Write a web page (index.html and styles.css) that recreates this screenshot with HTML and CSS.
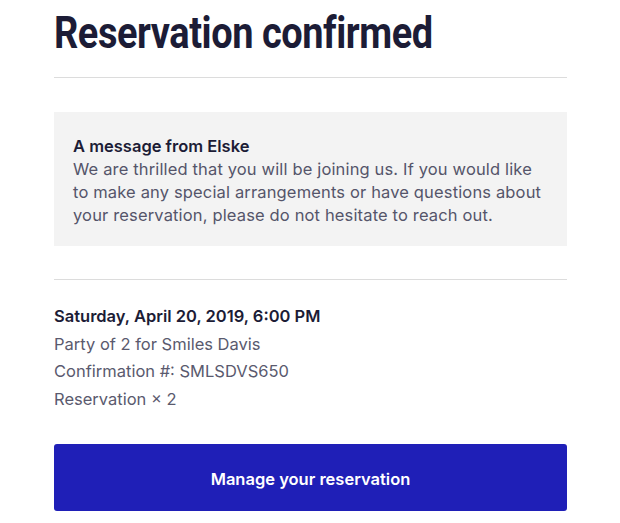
FILE: index.html
```html
<!DOCTYPE html>
<html>
<head>
<meta charset="utf-8">
<link rel="stylesheet" href="styles.css">
</head>
<body>
<main class="page">
  <h1 class="title">Reservation confirmed</h1>
  <hr class="divider">
  <section class="message">
    <h2 class="message-from">A message from Elske</h2>
    <p class="message-text">We are thrilled that you will be joining us. If you would like to make any special arrangements or have questions about your reservation, please do not hesitate to reach out.</p>
  </section>
  <hr class="divider">
  <section class="details">
    <div class="details-date">Saturday, April 20, 2019, 6:00 PM</div>
    <div class="details-line">Party of 2 for Smiles Davis</div>
    <div class="details-line">Confirmation #: SMLSDVS650</div>
    <div class="details-line">Reservation × 2</div>
  </section>
  <a class="button" href="#">Manage your reservation</a>
</main>
</body>
</html>
```

FILE: styles.css
```css
html, body {
  margin: 0;
  padding: 0;
  background: #ffffff;
}
.page {
  width: 513px;
  margin-left: 54px;
  font-family: "Inter", "Noto Sans", sans-serif;
  color: #1c1c36;
}
.title {
  font-family: "Roboto", "Liberation Sans", sans-serif;
  font-weight: 700;
  font-size: 44px;
  line-height: 52px;
  margin: 7px 0 0 0;
  letter-spacing: -0.5px;
  color: #1c1c36;
  white-space: nowrap;
  transform: scaleX(0.862);
  transform-origin: left center;
}
.divider {
  border: 0;
  border-top: 1px solid #dcdcdc;
  margin: 18px 0 0 0;
  height: 0;
}
.message {
  background: #f3f3f3;
  margin-top: 34px;
  padding: 23px 19px 19px 19px;
}
.message-from {
  font-size: 16.5px;
  font-weight: 600;
  line-height: 23px;
  margin: 0;
  color: #1c1c36;
}
.message-text {
  font-size: 16.5px;
  line-height: 23px;
  letter-spacing: 0.15px;
  margin: 0;
  color: #55556a;
}
.message + .divider {
  margin-top: 33px;
}
.details {
  padding-top: 23px;
}
.details-date {
  font-size: 16.5px;
  font-weight: 600;
  line-height: 27.5px;
  color: #1c1c36;
}
.details-line {
  font-size: 16.5px;
  line-height: 27.5px;
  color: #5a5a6e;
}
.button {
  display: flex;
  align-items: center;
  justify-content: center;
  box-sizing: border-box;
  margin-top: 31px;
  height: 67px;
  padding-top: 3px;
  background: #1f1fb7;
  border-radius: 3px;
  color: #ffffff;
  font-size: 16.5px;
  font-weight: 600;
  text-decoration: none;
}
```
